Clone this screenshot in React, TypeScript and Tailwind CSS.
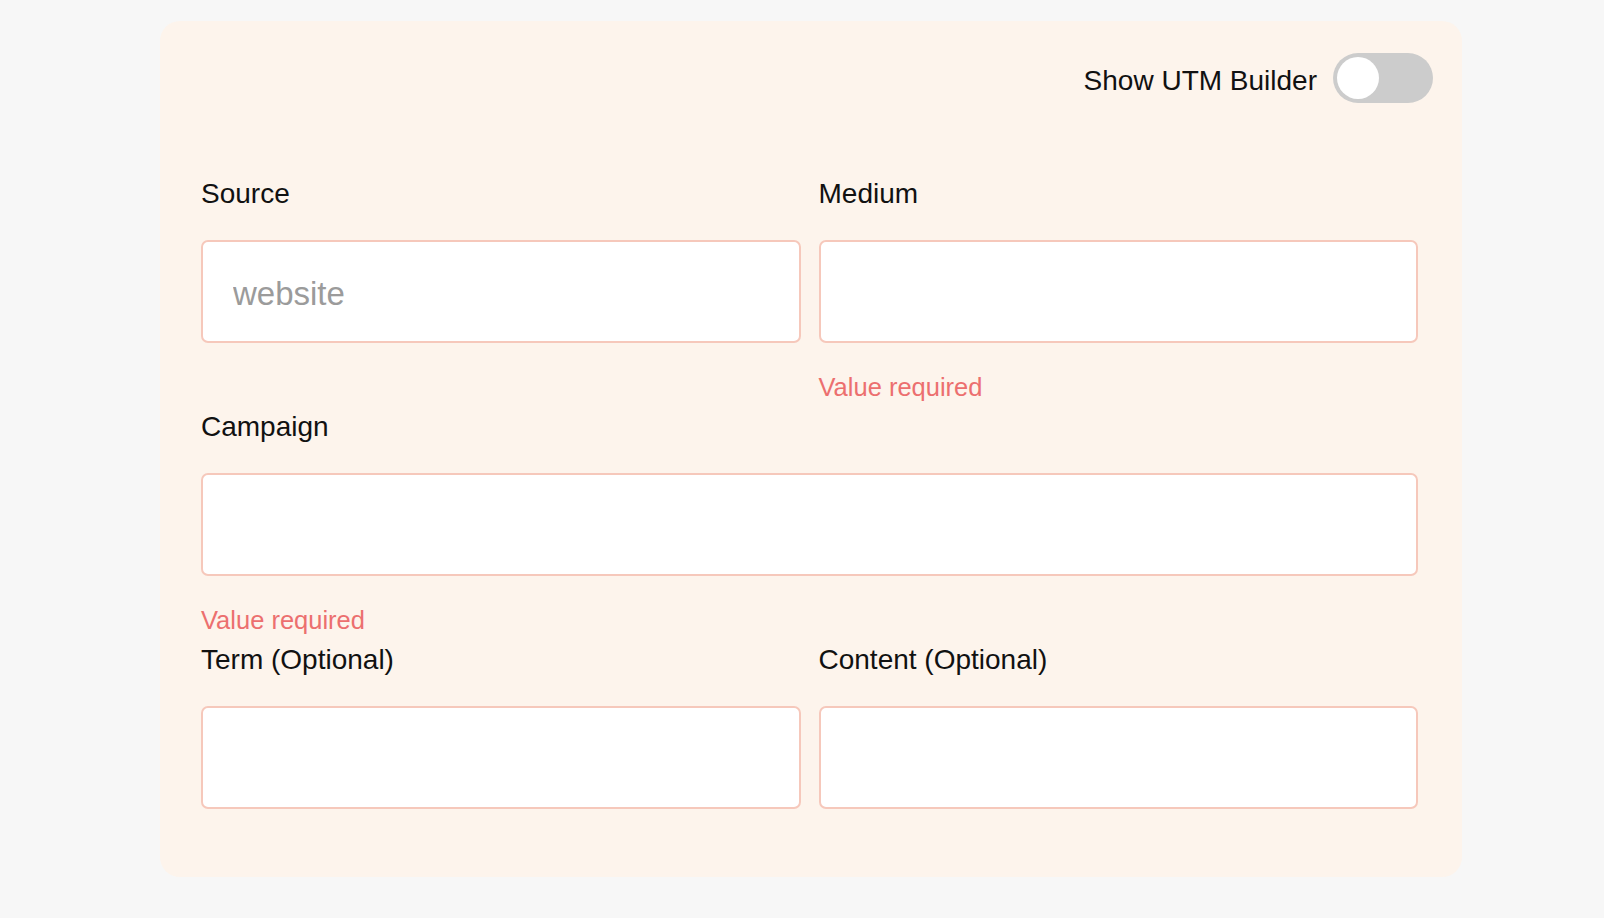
import { useState } from 'react';

type Field = {
    key: string;
    label: string;
    placeholder?: string;
    error?: string;
    wide?: boolean;
};

const fields: Field[] = [
    { key: 'source', label: 'Source', placeholder: 'website' },
    { key: 'medium', label: 'Medium', error: 'Value required' },
    { key: 'campaign', label: 'Campaign', error: 'Value required', wide: true },
    { key: 'term', label: 'Term (Optional)' },
    { key: 'content', label: 'Content (Optional)' },
];

export default function App() {
    // toggle state for the builder switch
    const [showBuilder, setShowBuilder] = useState(false);
    const [values, setValues] = useState<Record<string, string>>({});

    return (
        <div className="min-h-screen bg-[#f7f7f7] pt-[21px] font-['Liberation_Sans',Arial,sans-serif] text-[#111]">
            <div className="ml-[160px] w-[1302px] rounded-[20px] bg-[#fdf4ec]">
                <div className="flex items-center justify-end gap-4 pr-[29px] pt-[32px]">
                    <span className="mt-[6px] text-[28px] leading-[32px]">Show UTM Builder</span>
                    <button
                        onClick={() => setShowBuilder(!showBuilder)}
                        className={[
                            'flex h-[50px] w-[100px] items-center rounded-full px-[4px]',
                            showBuilder ? 'justify-end bg-[#4caf50]' : 'justify-start bg-[#cccccc]',
                        ].join(' ')}
                        aria-pressed={showBuilder}
                    >
                        <span className="h-[42px] w-[42px] rounded-full bg-white" />
                    </button>
                </div>

                <div className="mt-[75px] grid grid-cols-2 gap-x-[18px] pl-[41px] pr-[44px]">
                    {fields.map((f) => (
                        <div key={f.key} className={f.wide ? 'col-span-2' : ''}>
                            <label className="block h-[32px] text-[28px] leading-[32px]">{f.label}</label>
                            <input
                                value={values[f.key] ?? ''}
                                onChange={(e) => setValues({ ...values, [f.key]: e.target.value })}
                                placeholder={f.placeholder}
                                className="mt-[30px] block h-[103px] w-full rounded-[7px] border-2 border-[#f6c8bb] bg-white px-[30px] pt-[5px] text-[33px] outline-none placeholder:text-[#9b9b9b]"
                            />
                            <div className="h-[68px] pt-[30px] text-[25.5px] leading-[28px] text-[#ec6f6f]">
                                {f.error}
                            </div>
                        </div>
                    ))}
                </div>
            </div>
        </div>
    );
}
